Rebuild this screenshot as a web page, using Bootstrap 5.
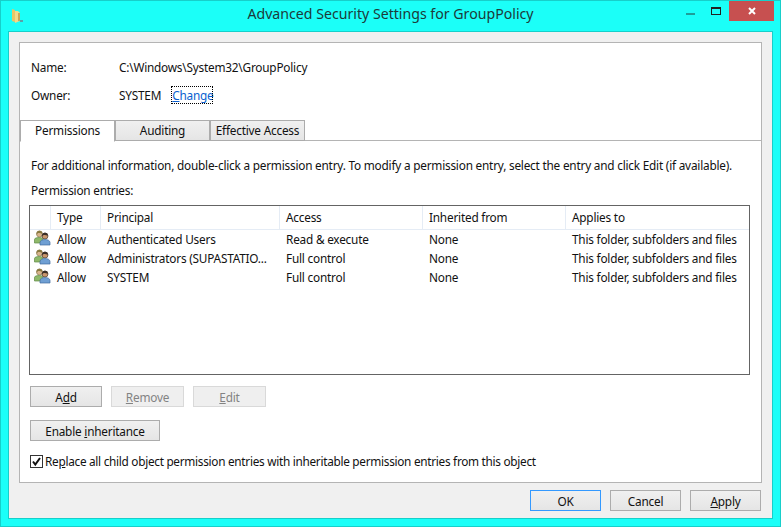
<!DOCTYPE html>
<html lang="en">
<head>
<meta charset="utf-8">
<title>Advanced Security Settings for GroupPolicy</title>
<link href="https://cdn.jsdelivr.net/npm/bootstrap@5.3.0/dist/css/bootstrap.min.css" rel="stylesheet">
<style>
html,body{margin:0;background:#1bfff8;overflow:hidden}
body{font-family:"Noto Sans","Open Sans",sans-serif;font-size:11.8px;line-height:16px;color:#111;letter-spacing:-.21px}
.win-frame{width:781px;height:527px;border:1px solid #17cfca;background:#1bfff8}
.win-title{height:30px}
.win-ico{width:20px;margin-left:9px;padding-top:5px}
.win-text{font-size:14.15px;line-height:20px;color:#1d3a3a;letter-spacing:0;padding:3px 0 0 74px}
.win-ctl{width:26px;height:20px}
.min-mark{margin-bottom:6px}
.win-close{background:#c75050;width:45px;height:20px;margin-right:6px}
.win-client{margin:0 7px;height:488px;background:#f0f0f0;border:1px solid #17cfca;padding:10px 10px 0}
.win-panel{height:441px;background:#fff;border:1px solid #b4b4b4}
.info-first{margin-top:16px}
.info-next{margin-top:12px}
.info-row{padding-left:11px;height:16px}
.info-key{width:88px}
.owner-link{color:#0a5fd0;text-decoration:none;outline:1px dotted #000;margin-left:11px;width:40px;height:16px;display:inline-block;text-align:center}
.win-tabs{margin-top:17px;height:21px;border-bottom:1px solid #b4b4b4;flex-wrap:nowrap}
.win-tabs .nav-link{width:95px;height:21px;padding:0;margin:0;border:1px solid #acacac;border-radius:0;background:linear-gradient(#f0f0f0,#e5e5e5);color:#111;text-align:center;line-height:19px}
.win-tabs .nav-link.active{background:#fff;border-color:#acacac #acacac #fff;height:22px;color:#111}
.perm-body{padding:16px 10px 0 9px}
.perm-note{margin:0 0 0 2px;white-space:nowrap;height:16px}
.perm-cap{margin:9px 0 0 2px;height:16px}
.perm-box{margin-top:7px;width:721px;height:170px;border:1px solid #646464;background:#fff}
.perm-table{table-layout:fixed;width:719px;margin:0;border-collapse:separate;border-spacing:0;color:#111}
.perm-table th,.perm-table td{padding:0 0 2px 6px;font-weight:400;white-space:nowrap;overflow:hidden;height:19px;line-height:16px;border:0;background:transparent;color:#111;box-shadow:none;vertical-align:middle}
.perm-table thead th{height:24px;border-right:1px solid #e5ecf5;border-bottom:1px solid #e5ecf5;padding:0 0 1px 6px;vertical-align:middle}
.perm-table thead th:last-child{border-right:0}
.perm-table td.ico-cell{padding:0 0 3px 4px}
.ico-cell svg{display:block}
.win-btn{height:21px;width:73px;padding:0;border:1px solid #acacac;border-radius:0;background:linear-gradient(#f0f0f0,#e5e5e5);font-size:11.8px;line-height:18px;color:#111;letter-spacing:-.21px}
.win-btn:disabled,.win-btn.disabled{background:#efefef;border-color:#d9d9d9;color:#838383;opacity:1}
.win-btn-add{width:72px}
.win-btn-wide{width:130px}
.win-btn-ok{border-color:#3399ff;width:71px}
.win-btn-foot{width:71px}
.btn-row{gap:9px;margin:11px 0 0 1px}
.inh-row{margin:13px 0 0 1px}
.chk-row{margin-top:12px;gap:2px;white-space:nowrap;padding-left:1px}
.chk-row label{letter-spacing:-.285px}
.chk-row .form-check-input{width:13px;height:13px;margin:0;border:1px solid #333;border-radius:0;background-color:#fff;background-size:11px 11px;background-image:url("data:image/svg+xml,%3Csvg xmlns='http://www.w3.org/2000/svg' viewBox='0 0 11 11'%3E%3Cpath d='M2 5.500 4.300 8.500 9 2' fill='none' stroke='%23111' stroke-width='2'/%3E%3C/svg%3E");box-shadow:none;opacity:1}
.foot-row{gap:9px;margin-top:7px;padding-right:1px}
</style>
</head>
<body>
<div class="win-frame">
  <div class="win-title d-flex align-items-start">
    <div class="win-ico">
      <svg width="14" height="16" viewBox="0 0 14 16"><path d="M2 1 5 2V14L2 13Z" fill="#e8c766"/><path d="M5 3H8L10 5V13L5 15Z" fill="#f3d98a"/><path d="M8 5 10 5V13H8Z" fill="#c9a85a"/><path d="M10 12h3v2h-3z" fill="#5aa0a8"/></svg>
    </div>
    <div class="win-text flex-grow-1 text-center">Advanced Security Settings for GroupPolicy</div>
    <div class="win-ctl d-flex justify-content-center align-items-end"><svg class="min-mark" width="9" height="2"><rect width="9" height="2" fill="#1f9d98"/></svg></div>
    <div class="win-ctl d-flex justify-content-center align-items-center"><svg width="10" height="8" viewBox="0 0 10 8"><rect x=".5" y=".5" width="9" height="7" fill="none" stroke="#222"/><rect width="10" height="2" fill="#222"/></svg></div>
    <div class="win-close d-flex justify-content-center align-items-center"><svg width="8" height="8" viewBox="0 0 8 8"><path d="M1 1 7 7M7 1 1 7" stroke="#fff" stroke-width="2"/></svg></div>
  </div>
  <div class="win-client">
    <div class="win-panel">
      <div class="info-row info-first d-flex"><div class="info-key">Name:</div><div>C:\Windows\System32\GroupPolicy</div></div>
      <div class="info-row info-next d-flex"><div class="info-key">Owner:</div><div>SYSTEM</div><a class="owner-link" href="#"><u>C</u>hange</a></div>
      <ul class="nav nav-tabs win-tabs">
        <li class="nav-item"><a class="nav-link active" href="#">Permissions</a></li>
        <li class="nav-item"><a class="nav-link" href="#">Auditing</a></li>
        <li class="nav-item"><a class="nav-link" href="#">Effective Access</a></li>
      </ul>
      <div class="perm-body">
        <p class="perm-note">For additional information, double-click a permission entry. To modify a permission entry, select the entry and click Edit (if available).</p>
        <p class="perm-cap">Permission entries:</p>
        <div class="perm-box">
          <table class="table perm-table">
            <colgroup><col style="width:21px"><col style="width:50px"><col style="width:179px"><col style="width:143px"><col style="width:143px"><col style="width:183px"></colgroup>
            <thead><tr><th></th><th>Type</th><th>Principal</th><th>Access</th><th>Inherited from</th><th>Applies to</th></tr></thead>
            <tbody>
              <tr><td class="ico-cell"><svg width="17" height="16" viewBox="0 0 17 16"><use href="#usr"/></svg></td><td>Allow</td><td>Authenticated Users</td><td>Read &amp; execute</td><td>None</td><td>This folder, subfolders and files</td></tr>
              <tr><td class="ico-cell"><svg width="17" height="16" viewBox="0 0 17 16"><use href="#usr"/></svg></td><td>Allow</td><td>Administrators (SUPASTATIO...</td><td>Full control</td><td>None</td><td>This folder, subfolders and files</td></tr>
              <tr><td class="ico-cell"><svg width="17" height="16" viewBox="0 0 17 16"><use href="#usr"/></svg></td><td>Allow</td><td>SYSTEM</td><td>Full control</td><td>None</td><td>This folder, subfolders and files</td></tr>
            </tbody>
          </table>
        </div>
        <div class="btn-row d-flex">
          <button class="btn win-btn win-btn-add" type="button">A<u>d</u>d</button>
          <button class="btn win-btn" type="button" disabled><u>R</u>emove</button>
          <button class="btn win-btn" type="button" disabled><u>E</u>dit</button>
        </div>
        <div class="inh-row"><button class="btn win-btn win-btn-wide" type="button">Enable <u>i</u>nheritance</button></div>
        <div class="chk-row d-flex align-items-center">
          <input class="form-check-input" type="checkbox" checked id="rep" aria-label="Replace">
          <label for="rep">Re<u>p</u>lace all child object permission entries with inheritable permission entries from this object</label>
        </div>
      </div>
    </div>
    <div class="foot-row d-flex justify-content-end">
      <button class="btn win-btn win-btn-ok" type="button">OK</button>
      <button class="btn win-btn win-btn-foot" type="button">Cancel</button>
      <button class="btn win-btn win-btn-foot" type="button"><u>A</u>pply</button>
    </div>
  </div>
</div>
<svg width="0" height="0" class="position-absolute"><defs><g id="usr">
<circle cx="5.500" cy="4" r="3" fill="#d8b48c" stroke="#8a7a50" stroke-width=".7"/>
<path d="M5.500 .8C3 .8 2.300 3 2.700 4.500L4 3C6 3.200 7.500 3 8 4 8.500 2 7.500 .8 5.500 .8Z" fill="#8a7a40"/>
<path d="M.5 13V9.500C.5 8 3 7.500 5.500 7.500S9 8.500 9 9.500V13Z" fill="#8fb96a" stroke="#5f8a45" stroke-width=".7"/>
<circle cx="11" cy="6" r="3" fill="#c9966c" stroke="#4a3b2c" stroke-width=".7"/>
<path d="M11 2.800C8.600 2.800 7.800 5 8.200 6.500L9.500 5C11.500 5.300 13 5 13.600 6 14 4 13 2.800 11 2.800Z" fill="#3a2f28"/>
<path d="M6 15V12.500C6 10.500 8.500 9.500 11 9.500S16 10.500 16 12.500V15Z" fill="#6f9fd3" stroke="#3f6a9e" stroke-width=".7"/>
</g></defs></svg>
</body>
</html>
